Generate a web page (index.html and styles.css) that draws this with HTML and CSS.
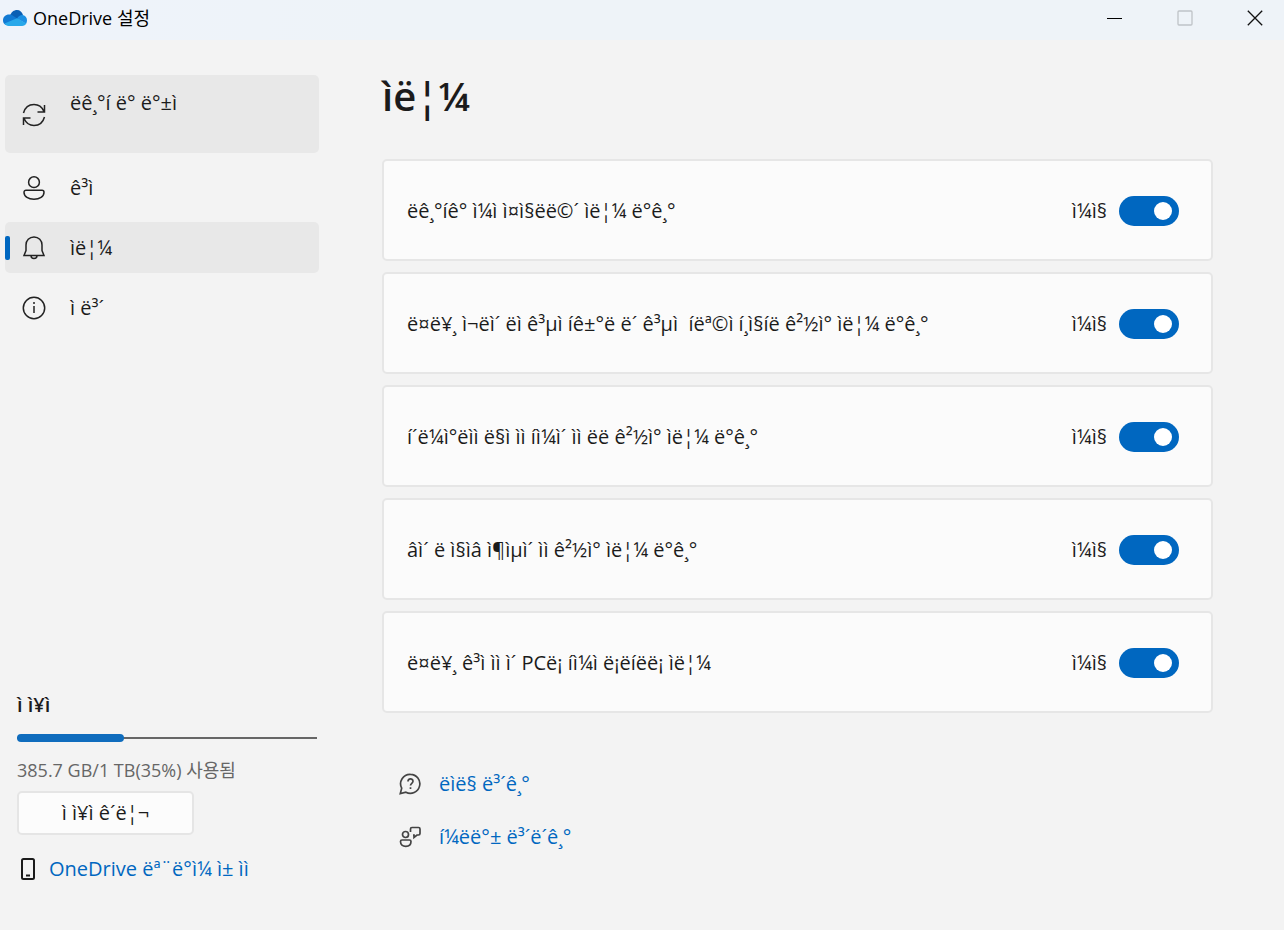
FILE: index.html
```html
<!DOCTYPE html>
<html lang="ko">
<head>
<meta charset="utf-8">
<meta name="viewport" content="width=device-width, initial-scale=1">
<title>OneDrive 설정</title>
<link rel="stylesheet" href="styles.css">
</head>
<body>
<div class="window">
  <header class="titlebar">
    <svg class="logo" viewBox="0 0 24 16" aria-hidden="true">
      <path d="M7 6C8 2 11 0 14 0c3 0 5 2 6 5l-6 5z" fill="#0a5fb4"/>
      <path d="M0 10.500C0 7 2.500 4.500 6 4.500c2 0 3 .5 4 1.200L18 11 3 15C1 14 0 12.500 0 10.500z" fill="#1179d3"/>
      <path d="M14 8.500c1.500-2.500 3.500-3.800 5.800-3.500C22.500 5.500 24 7.800 24 10.500c0 1.300-.4 2.400-1 3.200z" fill="#1b8fe3"/>
      <path d="M1.500 13.500 14 8.300l9.300 5.200C22.500 15 21 16 19 16H5.500c-1.800 0-3.200-1-4-2.500z" fill="#28a8ea"/>
    </svg>
    <span class="titlebar-text">OneDrive 설정</span>
    <div class="window-buttons">
      <button class="window-button" aria-label="최소화"><svg viewBox="0 0 16 16"><path d="M0 8.500h15" stroke="#000"/></svg></button>
      <button class="window-button" aria-label="최대화" disabled><svg viewBox="0 0 16 16"><rect x="1" y="1" width="14" height="14" rx="1" stroke="#bfc3c7" stroke-width="1.300"/></svg></button>
      <button class="window-button" aria-label="닫기"><svg viewBox="0 0 16 16"><path d="m.8.8 14.400 14.400m0-14.400L.8 15.200" stroke="#111" stroke-width="1.300"/></svg></button>
    </div>
  </header>

  <div class="layout">
    <aside class="sidebar">
      <nav class="nav">
        <a class="nav-item nav-item-tall" href="#sync">
          <svg class="nav-icon" viewBox="0 0 24 24"><path d="M1.500 10C3 4.500 7 1.500 12 1.500c4.500 0 8 2.500 9.800 6.700M22.500 2v7h-7M22.500 14C21 19.500 17 22.500 12 22.500c-4.500 0-8-2.500-9.800-6.700M1.500 22v-7h7"/></svg>
          <span>ëê¸°í ë° ë°±ì</span>
        </a>
        <a class="nav-item" href="#account">
          <svg class="nav-icon" viewBox="0 0 24 24"><circle cx="12" cy="6.200" r="5.400"/><path d="M4 14.200h16a2 2 0 0 1 2 2c0 4.500-4.500 7-10 7s-10-2.500-10-7a2 2 0 0 1 2-2z"/></svg>
          <span>ê³ì </span>
        </a>
        <a class="nav-item nav-item-current" href="#alerts" aria-current="page">
          <svg class="nav-icon" viewBox="0 0 24 24"><path d="M12 1C7.300 1 4 4.500 4 9v5.500l-2 5h20l-2-5V9c0-4.500-3.300-8-8-8zM9 19.500a3 3 0 0 0 6 0"/></svg>
          <span>ìë¦¼</span>
        </a>
        <a class="nav-item" href="#about">
          <svg class="nav-icon" viewBox="0 0 24 24"><circle cx="12" cy="12" r="10.700"/><path d="M12 10v7"/><circle class="dot" cx="12" cy="7" r="1"/></svg>
          <span>ì ë³´</span>
        </a>
      </nav>

      <section class="storage">
        <h2 class="storage-title">ì ì¥ì</h2>
        <div class="meter" role="progressbar" aria-valuenow="35" aria-valuemin="0" aria-valuemax="100" aria-label="ì ì¥ì"><div class="meter-fill" style="width:35.700%"></div></div>
        <p class="storage-text">385.7 GB/1 TB(35%) 사용됨</p>
        <button class="button">ì ì¥ì ê´ë¦¬</button>
        <a class="mobile-link" href="#mobile">
          <svg class="phone-icon" viewBox="0 0 14 22"><rect x="1" y="1" width="12" height="20" rx="1.500"/><path d="M5 17.500h4"/></svg>
          <span>OneDrive ëª¨ë°ì¼ ì± ìì</span>
        </a>
      </section>
    </aside>

    <main class="main">
      <h1 class="page-title">ìë¦¼</h1>
      <div class="cards">
        <label class="card"><span class="card-text">ëê¸°íê° ì¼ì ì¤ì§ëë©´ ìë¦¼ ë°ê¸°</span><span class="state">ì¼ì§</span><input class="toggle" type="checkbox" role="switch" checked></label>
        <label class="card"><span class="card-text">ë¤ë¥¸ ì¬ëì´ ëì ê³µì íê±°ë ë´ ê³µì &nbsp;íëª©ì í¸ì§íë ê²½ì° ìë¦¼ ë°ê¸°</span><span class="state">ì¼ì§</span><input class="toggle" type="checkbox" role="switch" checked></label>
        <label class="card"><span class="card-text">í´ë¼ì°ëìì ë§ì ìì íì¼ì´ ìì ëë ê²½ì° ìë¦¼ ë°ê¸°</span><span class="state">ì¼ì§</span><input class="toggle" type="checkbox" role="switch" checked></label>
        <label class="card"><span class="card-text">âì´ ë ì§ìâ ì¶ìµì´ ìì ê²½ì° ìë¦¼ ë°ê¸°</span><span class="state">ì¼ì§</span><input class="toggle" type="checkbox" role="switch" checked></label>
        <label class="card"><span class="card-text">ë¤ë¥¸ ê³ì ìì ì´ PCë¡ íì¼ì ë¡ëíëë¡ ìë¦¼</span><span class="state">ì¼ì§</span><input class="toggle" type="checkbox" role="switch" checked></label>
      </div>
      <div class="help">
        <a class="help-link" href="#help">
          <svg class="help-icon" viewBox="0 0 22 22"><path d="M11.500 1.300a9.500 9.500 0 1 1-4.600 17.900L1.300 20.500l1.400-5.300A9.500 9.500 0 0 1 11.500 1.300zM9 8.500c0-3.500 5-3.300 5-.3 0 2-2.500 2.200-2.500 4.300M11.500 14.300v1.700"/></svg>
          <span>ëìë§ ë³´ê¸°</span>
        </a>
        <a class="help-link" href="#feedback">
          <svg class="help-icon" viewBox="0 0 22 22"><circle cx="6.500" cy="8.500" r="3"/><path d="M3 14h7.500a1.500 1.500 0 0 1 1.500 1.500c0 3-2 4.800-5.200 4.800s-5.300-1.800-5.300-4.800A1.500 1.500 0 0 1 3 14zM11.500 6V3A1.500 1.500 0 0 1 13 1.500h6.500A1.500 1.500 0 0 1 21 3v4.500A1.500 1.500 0 0 1 19.500 9H18l-3 2.500V9h-1"/></svg>
          <span>í¼ëë°± ë³´ë´ê¸°</span>
        </a>
      </div>
    </main>
  </div>
</div>
</body>
</html>
```
FILE: styles.css
```css
* { box-sizing: border-box; }

body {
  margin: 0;
  background: #f3f3f3;
  color: #1b1b1b;
  font: 20px/28px "Open Sans", "Noto Sans", "Noto Sans CJK KR", sans-serif;
}

svg { fill: none; flex: none; }
a { text-decoration: none; color: inherit; }
button { font: inherit; color: inherit; }

.window { min-height: 100vh; display: flex; flex-direction: column; }

.titlebar {
  display: flex;
  align-items: center;
  height: 40px;
  padding: 0 0 4px 3px;
  background: linear-gradient(90deg, #eef3fb, #eef3f8 30%);
  color: #000;
}
.logo { width: 24px; height: 16px; }
.titlebar-text { margin-left: 6px; font-size: 18px; }
.window-buttons { display: flex; margin-left: auto; }
.window-button {
  display: grid;
  place-items: center;
  width: 70px;
  height: 36px;
  padding: 0 0 0 12px;
  border: 0;
  background: none;
}
.window-button svg { width: 16px; height: 16px; }

.layout { flex: 1; display: flex; gap: 63px; padding: 35px 71px 0 5px; }

.sidebar {
  width: 314px;
  flex: none;
  display: flex;
  flex-direction: column;
  justify-content: space-between;
}
.nav { display: flex; flex-direction: column; gap: 9px; }
.nav-item {
  position: relative;
  display: flex;
  align-items: center;
  gap: 24px;
  height: 51px;
  padding: 1px 17px 0;
  border-radius: 5px;
}
.nav-item-tall { height: 78px; background: #e8e8e8; }
.nav-item-tall span { padding-bottom: 24px; }
.nav-item-current { background: #e8e8e8; }
.nav-item-current::before {
  content: "";
  position: absolute;
  left: 0;
  width: 5px;
  height: 24px;
  border-radius: 2px;
  background: #0067c0;
}
.nav-icon { width: 24px; height: 24px; stroke: #222; stroke-width: 1.5; }
.dot { fill: #222; stroke: none; }

.storage { padding: 0 2px 47px 12px; }
.storage-title { margin: 0; font-size: 20px; font-weight: 600; line-height: 28px; }
.meter {
  display: flex;
  align-items: center;
  height: 8px;
  margin-top: 15px;
  background: linear-gradient(#666, #666) center / 100% 2px no-repeat;
}
.meter-fill { height: 8px; border-radius: 4px; background: #0f6cbd; }
.storage-text { margin: 14px 0 7px; font-size: 18px; color: #666; }
.button {
  display: block;
  width: 177px;
  height: 44px;
  padding: 0;
  border: 2px solid #e5e5e5;
  border-radius: 5px;
  background: #fcfcfc;
}
.mobile-link { display: flex; align-items: center; gap: 14px; margin-top: 20px; padding-left: 4px; color: #0067c0; }
.phone-icon { width: 14px; height: 22px; stroke: #1b1b1b; stroke-width: 2; }

.main { flex: 1; min-width: 0; }
.page-title { margin: 0 0 42px; font-size: 40px; font-weight: 600; line-height: 42px; }
.cards { display: flex; flex-direction: column; gap: 11px; }
.card {
  display: flex;
  align-items: center;
  min-height: 102px;
  padding: 1px 32px 0 23px;
  border: 2px solid #e6e6e6;
  border-radius: 5px;
  background: #fbfbfb;
}
.card-text { flex: 1; }
.state { margin-right: 12px; }
.toggle {
  appearance: none;
  display: flex;
  align-items: center;
  justify-content: flex-end;
  width: 60px;
  height: 30px;
  margin: 0;
  padding: 0 7px;
  border-radius: 15px;
  background: #0067c0;
}
.toggle::before {
  content: "";
  width: 18px;
  height: 18px;
  border-radius: 50%;
  background: #fff;
}
.toggle:not(:checked) { justify-content: flex-start; background: #8a8a8a; }

.help { display: flex; flex-direction: column; gap: 25px; padding: 57px 0 32px 17px; }
.help-link { display: flex; align-items: center; gap: 18px; color: #0067c0; }
.help-icon { width: 22px; height: 22px; stroke: #444; stroke-width: 1.7; }
```
